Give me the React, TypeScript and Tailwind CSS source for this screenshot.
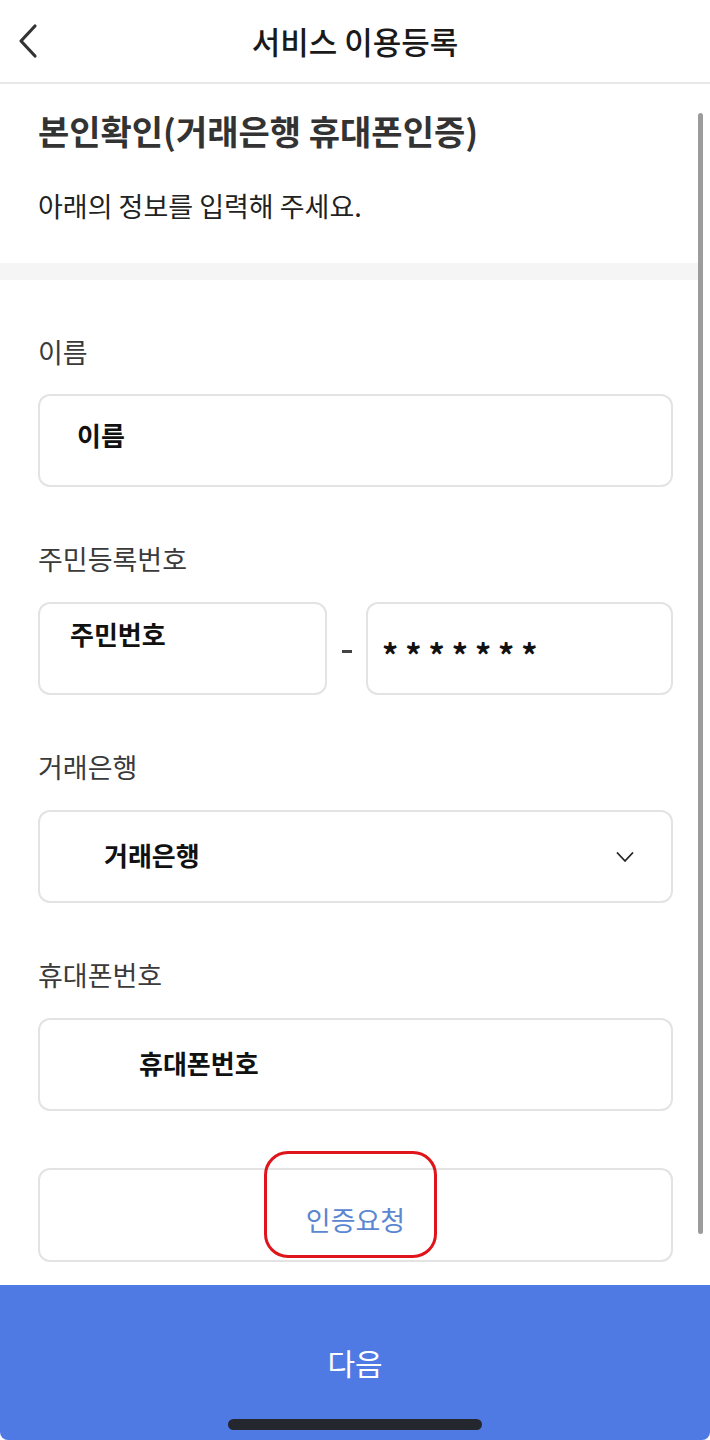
// ::Component:: ServiceRegistration

import React from 'react';

const FONT = '"Noto Sans CJK KR", "Noto Sans", sans-serif';

function FieldLabel({ children }: { children: React.ReactNode }) {
  return (
    <div className="mt-[56px] h-[32px] text-[27px] leading-[32px] text-[#3a3a3a]">
      {children}
    </div>
  );
}

function BackIcon() {
  return (
    <svg width="24" height="36" viewBox="0 0 24 36" fill="none">
      <path
        d="M19 3 L5 18 L19 33"
        stroke="#333"
        strokeWidth="3.2"
        strokeLinecap="round"
        strokeLinejoin="round"
      />
    </svg>
  );
}

function ChevronDown() {
  return (
    <svg width="18" height="12" viewBox="0 0 18 12" fill="none">
      <path
        d="M1.5 2 L9 10 L16.5 2"
        stroke="#222"
        strokeWidth="1.8"
        strokeLinecap="round"
        strokeLinejoin="round"
      />
    </svg>
  );
}

/**
 * ServiceRegistration: identity check form (bank + phone auth)
 */
export default function App() {
  const boxClass =
    'h-[93px] rounded-[12px] border-2 border-[#e3e3e3] bg-white';

  return (
    <div
      className="relative w-[710px] h-[1440px] overflow-hidden bg-white flex flex-col"
      style={{ fontFamily: FONT }}
    >
      {/* Header */}
      <header className="h-[84px] shrink-0 border-b-2 border-[#e8e8e8] flex items-center relative">
        <div className="absolute left-[16px] top-[23px]">
          <BackIcon />
        </div>
        <h1 className="w-full text-center text-[31px] leading-[38px] font-medium text-[#1a1a1a]">
          서비스 이용등록
        </h1>
      </header>

      {/* Content */}
      <main className="flex-1 relative">
        <div className="px-[38px] pt-[27px]">
          <h2 className="h-[40px] text-[34px] leading-[40px] font-bold text-[#333] whitespace-nowrap">
            본인확인(거래은행 휴대폰인증)
          </h2>
          <p className="mt-[39px] h-[32px] text-[27px] leading-[32px] text-[#222]">
            아래의 정보를 입력해 주세요.
          </p>
        </div>

        <div className="mt-[41px] h-[17px] bg-[#f5f5f5] mr-[10px]" />

        <div className="px-[38px] pr-[37px]">
          {/* 이름 */}
          <FieldLabel>이름</FieldLabel>
          <div className={`mt-[26px] ${boxClass} pl-[37px] pt-[23px]`}>
            <span className="text-[26px] leading-[32px] font-bold text-[#111]">이름</span>
          </div>

          {/* 주민등록번호 */}
          <FieldLabel>주민등록번호</FieldLabel>
          <div className="mt-[27px] flex items-center">
            <div className={`w-[289px] ${boxClass} pl-[30px] pt-[14px]`}>
              <span className="text-[26px] leading-[32px] font-bold text-[#111]">주민번호</span>
            </div>
            <div className="w-[39px] flex justify-center pt-[6px]">
              <span className="block w-[10px] h-[3px] bg-[#444]" />
            </div>
            <div className={`flex-1 ${boxClass} pl-[14px] flex items-center`}>
              <span className="text-[32px] leading-[32px] font-bold text-[#111] tracking-[7px] pt-[10px]">
                *******
              </span>
            </div>
          </div>

          {/* 거래은행 */}
          <FieldLabel>거래은행</FieldLabel>
          <div className={`mt-[27px] ${boxClass} relative pl-[64px] pt-[27px]`}>
            <span className="text-[26px] leading-[32px] font-bold text-[#111]">거래은행</span>
            <div className="absolute right-[37px] top-[39px]">
              <ChevronDown />
            </div>
          </div>

          {/* 휴대폰번호 */}
          <FieldLabel>휴대폰번호</FieldLabel>
          <div className={`mt-[27px] ${boxClass} pl-[99px] pt-[27px]`}>
            <span className="text-[26px] leading-[32px] font-bold text-[#111]">휴대폰번호</span>
          </div>

          {/* 인증요청 */}
          <div className="mt-[57px] relative h-[94px] rounded-[12px] border-2 border-[#e3e3e3] flex justify-center pt-[34px]">
            <span className="text-[27px] leading-[32px] text-[#5b86d2]">인증요청</span>
            <div className="absolute left-[224px] top-[-19px] w-[173px] h-[107px] rounded-[24px] border-[3px] border-[#e0151c]" />
          </div>
        </div>

        {/* Scrollbar */}
        <div className="absolute right-[7px] top-[29px] w-[5px] h-[1121px] rounded-full bg-[#9c9c9c]" />
      </main>

      {/* Bottom action bar */}
      <footer className="h-[155px] shrink-0 bg-[#4f7ae3] rounded-b-[8px] flex flex-col items-center">
        <div className="mt-[59px] text-[30px] leading-[36px] text-white">다음</div>
        <div className="mt-[39px] w-[254px] h-[11px] rounded-full bg-[#25272e]" />
      </footer>
    </div>
  );
}
